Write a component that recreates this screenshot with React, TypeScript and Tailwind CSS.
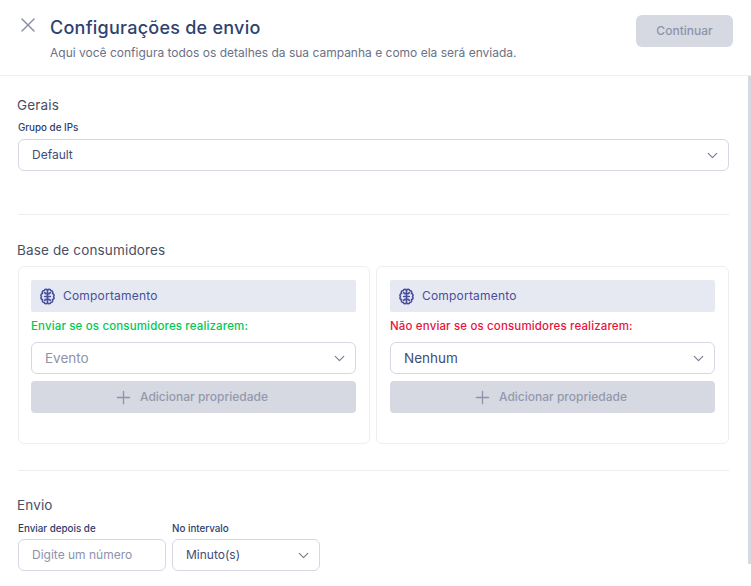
import React from "react";
import { ChevronDown, Plus, X } from "lucide-react";

const BrainIcon = () => (
    <svg width="17" height="17" viewBox="0 0 24 24" fill="none" stroke="#474f9c" strokeWidth="2.3" strokeLinecap="round" strokeLinejoin="round">
        <path d="M12 3C11 1.2 8 1.2 7.5 3.5 5 3.5 3.8 6 5 7.8 2.4 8.5 2.2 11 3.5 12 2.2 13.5 2.4 15.5 5 16.3 3.8 18.5 5.5 20.5 7.5 20.5 8 22.8 11 22.8 12 21 13 22.8 16 22.8 16.5 20.5 18.5 20.5 20.2 18.5 19 16.3 21.6 15.5 21.8 13.5 20.5 12 21.8 11 21.6 8.5 19 7.8 20.2 6 19 3.5 16.5 3.5 16 1.2 13 1.2 12 3Z" />
        <path d="M12 3v18" />
        <path d="M12 8H9.5L8 6.5M12 8h2.5L16 6.5M12 16H9.5L8 17.500M12 16h2.500L16 17.500M8 12h8" />
    </svg>
);

const Select = ({ value, muted, big, className }: { value: string; muted?: boolean; big?: boolean; className?: string }) => (
    <div className={`h-8 flex items-center justify-between pl-[13px] pr-[7px] bg-white border border-[#d5d8e2] rounded-[6px] ${className ?? ""}`}>
        <span className={`${big ? "text-[13.5px]" : "text-[12px]"} ${muted ? "text-[#8e93a8]" : "text-[#414d74]"}`}>{value}</span>
        <ChevronDown size={17} strokeWidth={1.8} className="text-[#7c8297]" />
    </div>
);

const SectionTitle = ({ children }: { children: React.ReactNode }) => (
    <h2 className="-ml-px text-[13.5px] leading-[18px] tracking-[0.15px] text-[#4a4f63]">{children}</h2>
);

const FieldLabel = ({ children }: { children: React.ReactNode }) => (
    <p className="text-[9.8px] leading-[12px] font-medium text-[#2f3d6b]">{children}</p>
);

const BehaviorCard = ({ rule, ruleColor, value, muted, className }: { rule: string; ruleColor: string; value: string; muted?: boolean; className: string }) => (
    <div className={`h-[178px] border border-[#eceef2] rounded-[6px] pt-[13px] pr-[13px] ${className}`}>
        <div className="h-8 flex items-center gap-[7px] pl-[8px] bg-[#e6e9f2] rounded-[2px]">
            <BrainIcon />
            <span className="text-[12px] tracking-[0.2px] text-[#474f9c]">Comportamento</span>
        </div>
        <p className={`mt-[6px] text-[11.5px] leading-[16px] font-medium tracking-[0.15px] ${ruleColor}`}>{rule}</p>
        <Select value={value} muted={muted} big className="mt-[8px]" />
        <div className="mt-[7px] h-8 flex items-center justify-center gap-[6px] bg-[#d6d9e2] rounded-[4px] pr-[6px]">
            <Plus size={21} strokeWidth={1.5} className="text-[#8e93a8]" />
            <span className="text-[12px] font-medium text-[#9498ad]">Adicionar propriedade</span>
        </div>
    </div>
);

export default function App() {
    return (
        <div className="w-[751px] h-[586px] overflow-hidden bg-white font-['Inter',sans-serif]">
            {/* header */}
            <header className="h-[76px] flex justify-between border-b border-[#eceef2] pl-[16px] pr-[18px]">
                <div className="flex gap-[10px]">
                    <X size={24} strokeWidth={1.5} className="mt-[13px] text-[#8a90a6]" />
                    <div className="pt-[15px]">
                        <h1 className="text-[18px] leading-[25px] font-medium tracking-[0.25px] text-[#2f4270]">Configurações de envio</h1>
                        <p className="mt-[5px] text-[12px] leading-[16px] text-[#6b7186]">
                            Aqui você configura todos os detalhes da sua campanha e como ela será enviada.
                        </p>
                    </div>
                </div>
                <button className="mt-[15px] w-[97px] h-8 bg-[#d6d9e2] rounded-[6px] text-[12px] font-medium text-[#8e93a8]">
                    Continuar
                </button>
            </header>

            <div className="flex h-[510px] items-start">
                <main className="flex-1 pl-[18px] pr-[19px] min-w-0">
                    {/* gerais */}
                    <section className="pt-[20px] h-[139px] border-b border-[#eceef2]">
                        <SectionTitle>Gerais</SectionTitle>
                        <div className="mt-[8px]">
                            <FieldLabel>Grupo de IPs</FieldLabel>
                        </div>
                        <Select value="Default" className="mt-[5px]" />
                    </section>

                    {/* base */}
                    <section className="pt-[26px] h-[256px] border-b border-[#eceef2]">
                        <SectionTitle>Base de consumidores</SectionTitle>
                        <div className="mt-[7px] flex gap-[6px]">
                            <BehaviorCard className="w-[352px] pl-[12px]" rule="Enviar se os consumidores realizarem:" ruleColor="text-[#00c853]" value="Evento" muted />
                            <BehaviorCard className="flex-1 pl-[13px]" rule="Não enviar se os consumidores realizarem:" ruleColor="text-[#e8133f]" value="Nenhum" />
                        </div>
                    </section>

                    {/* envio */}
                    <section className="pt-[25px]">
                        <SectionTitle>Envio</SectionTitle>
                        <div className="mt-[9px] flex gap-[6px]">
                            <div className="w-[148px]">
                                <FieldLabel>Enviar depois de</FieldLabel>
                                <div className="mt-[4px] h-8 flex items-center pl-[13px] border border-[#d5d8e2] rounded-[6px] text-[12px] text-[#8e93a8]">
                                    Digite um número
                                </div>
                            </div>
                            <div className="w-[148px]">
                                <FieldLabel>No intervalo</FieldLabel>
                                <Select value="Minuto(s)" className="mt-[4px]" />
                            </div>
                        </div>
                    </section>
                </main>
                <div className="w-[3px] h-[488px] bg-[#d6d9e2]" />
            </div>
        </div>
    );
}
